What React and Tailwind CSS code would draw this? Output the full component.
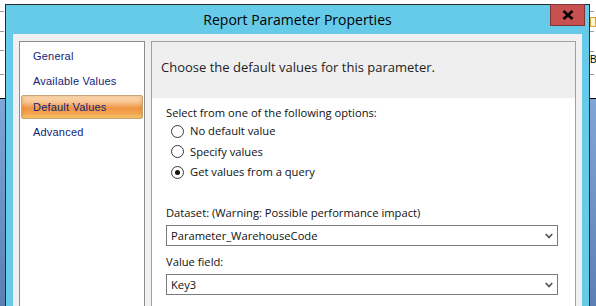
import React from "react";

const navFont = { fontFamily: '"Liberation Sans", Arial, sans-serif' };

function Dash({ mt }) {
  return <div className={`h-px w-[4px] bg-[#9a9a9a] shrink-0 ${mt}`} />;
}

function Radio({ checked, label }) {
  return (
    <div className="h-[20.5px] flex items-center pl-[5px]">
      <div className="w-[13px] h-[13px] rounded-full border border-[#3c3c3c] bg-white flex items-center justify-center shrink-0">
        {checked && <div className="w-[5px] h-[5px] rounded-full bg-[#111]" />}
      </div>
      <span className="ml-[6px] text-[11.2px] leading-[16px] text-[#111]">{label}</span>
    </div>
  );
}

function Combo({ value }) {
  return (
    <div className="w-[392px] h-[21px] border border-[#7a7a7a] bg-white flex items-center pl-[4px] pr-[4px]">
      <span className="flex-1 text-[11.2px] leading-[16px] text-[#111]">{value}</span>
      <svg width="8" height="6" viewBox="0 0 8 6" className="shrink-0">
        <path d="M0.8 1 L4 4.5 L7.2 1" fill="none" stroke="#555" strokeWidth="1.8" />
      </svg>
    </div>
  );
}

export default function App() {
  return (
    <div
      className="w-[596px] h-[306px] flex overflow-hidden bg-white"
      style={{ fontFamily: '"Open Sans", "Noto Sans", sans-serif' }}
    >
      {/* left outside strip */}
      <div className="w-[5px] shrink-0 flex flex-col">
        <div className="h-[98px] flex flex-col">
          <Dash mt="mt-[11px]" />
          <Dash mt="mt-[19px]" />
          <Dash mt="mt-[18px]" />
          <Dash mt="mt-[23px]" />
        </div>
        <div className="flex-1 border-t border-black bg-[linear-gradient(to_bottom,#80a6d6,#5b7fb3)]" />
      </div>

      {/* dialog */}
      <div className="w-[585px] shrink-0 mt-[4px] border-t border-x border-[#2b2b2b] bg-[#65cbe9] flex flex-col">
        <div className="relative h-[29px] flex items-center justify-center">
          <span className="text-[14px] leading-[20px] text-black">Report Parameter Properties</span>
          <div className="absolute right-[4px] top-[-1px] w-[35px] h-[22px] bg-[#c75050] border border-[#7b3535] flex items-center justify-center">
            <svg width="12" height="10" viewBox="0 0 12 10">
              <path d="M1.5 1 L10.5 9 M10.5 1 L1.5 9" stroke="#000" strokeWidth="2.6" />
            </svg>
          </div>
        </div>

        <div className="flex-1 mx-[7px] bg-[#f0f0f0] flex pt-[7px] pl-[6px] gap-[6px]">
          {/* nav */}
          <div className="w-[126px] border border-b-0 border-[#8c8c8c] bg-white flex flex-col pt-[2px] px-[1px] gap-[1.5px]" style={navFont}>
            <div className="h-[24px] flex items-center pl-[12px] text-[11px] tracking-[0.2px] text-[#14237a]">General</div>
            <div className="h-[24px] flex items-center pl-[12px] text-[11px] tracking-[0.2px] text-[#14237a]">Available Values</div>
            <div className="h-[24px] flex items-center pl-[11px] text-[11px] tracking-[0.2px] text-[#14237a] rounded-[2px] border border-[#c9a574] bg-[linear-gradient(to_bottom,#fce3c2_0%,#f7c18c_30%,#ef9443_55%,#f3a650_80%,#fcd47a_100%)] shadow-[inset_0_0_4px_rgba(210,110,20,0.45)]">
              Default Values
            </div>
            <div className="h-[24px] flex items-center pl-[12px] text-[11px] tracking-[0.2px] text-[#14237a]">Advanced</div>
          </div>

          {/* right panel */}
          <div className="w-[425px] border border-b-0 border-[#a0a0a0] bg-white flex flex-col">
            <div className="h-[56px] bg-[#efefef] pl-[9px] pt-[15px]">
              <div className="text-[13px] leading-[20px] text-[#1e1e1e]">Choose the default values for this parameter.</div>
            </div>
            <div className="flex flex-col pl-[14px]">
              <div className="mt-[7px] text-[11.2px] leading-[16px] text-[#111]">Select from one of the following options:</div>
              <Radio label="No default value" />
              <Radio label="Specify values" />
              <Radio checked label="Get values from a query" />
              <div className="mt-[22.5px] text-[11.2px] leading-[16px] text-[#111]">Dataset: (Warning: Possible performance impact)</div>
              <div className="mt-[4px]">
                <Combo value="Parameter_WarehouseCode" />
              </div>
              <div className="mt-[8px] text-[11.2px] leading-[16px] text-[#111]">Value field:</div>
              <div className="mt-[4px]">
                <Combo value="Key3" />
              </div>
            </div>
          </div>
        </div>
      </div>

      {/* right outside strip */}
      <div className="w-[6px] shrink-0 flex flex-col overflow-hidden">
        <div className="h-[98px] flex flex-col">
          <Dash mt="mt-[11px]" />
          <div className="mt-[5px] h-[10px] w-[6px] border border-[#e0a040] bg-[#fff6d8]" />
          <Dash mt="mt-[4px]" />
          <Dash mt="mt-[19px]" />
          <div className="mt-[3px] text-[10px] leading-[10px] text-black" style={navFont}>B</div>
          <Dash mt="mt-[9px]" />
        </div>
        <div className="flex-1 border-t border-black bg-[linear-gradient(to_bottom,#80a6d6,#5b7fb3)]" />
      </div>
    </div>
  );
}
